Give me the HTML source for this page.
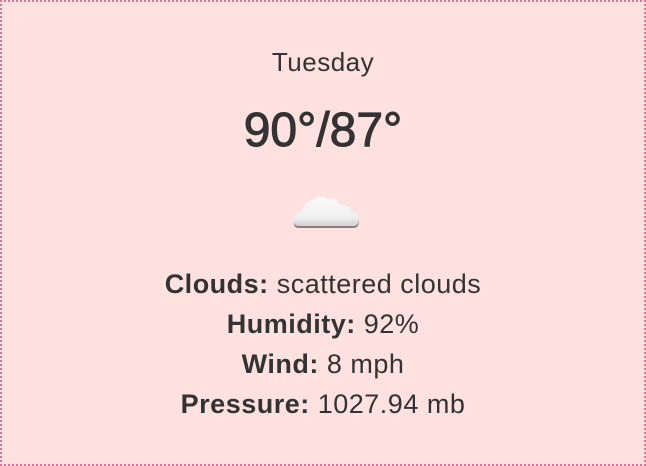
<!DOCTYPE html>
<html><head><style>
html,body{margin:0;padding:0}
body{width:646px;height:466px;overflow:hidden;background:#fff}
.box{position:absolute;left:0;top:0;width:642px;height:462px;border:2px dotted #e0709c;background:#ffe1e0;font-family:"Liberation Sans",sans-serif;color:#333;text-align:center}
.t{position:absolute;left:0;right:0;white-space:nowrap}
b{font-weight:bold}
.d{font-size:27px;line-height:30px;letter-spacing:0.5px}
</style></head><body>
<div class="box">
<div class="t" style="top:45px;font-size:26px;line-height:30px;letter-spacing:0.5px">Tuesday</div>
<div class="t" style="top:102px;font-size:48px;line-height:54px;-webkit-text-stroke:1px #333">90°/87°</div>
<svg style="position:absolute;left:289px;top:186px" width="72" height="44" viewBox="0 0 72 44">
<defs><linearGradient id="g" x1="0" y1="0" x2="0" y2="1"><stop offset="0" stop-color="#fafafa"/><stop offset="0.7" stop-color="#f0f0f0"/><stop offset="1" stop-color="#d0d0d0"/></linearGradient></defs>
<path d="M8 38 Q2 38 3 31 Q4 25 11 24 Q12 14 22 12 Q29 6 37 11 Q44 8 49 17 Q58 16 61 24 Q68 25 68 31 Q68 38 62 38 Z" fill="#555" opacity="0.7" transform="translate(0,2)"/>
<path d="M8 38 Q2 38 3 31 Q4 25 11 24 Q12 14 22 12 Q29 6 37 11 Q44 8 49 17 Q58 16 61 24 Q68 25 68 31 Q68 38 62 38 Z" fill="url(#g)"/>
</svg>
<div class="t d" style="top:267px"><b>Clouds:</b> scattered clouds</div>
<div class="t d" style="top:307px"><b>Humidity:</b> 92%</div>
<div class="t d" style="top:347px"><b>Wind:</b> 8 mph</div>
<div class="t d" style="top:387px"><b>Pressure:</b> 1027.94 mb</div>
</div>
</body></html>
